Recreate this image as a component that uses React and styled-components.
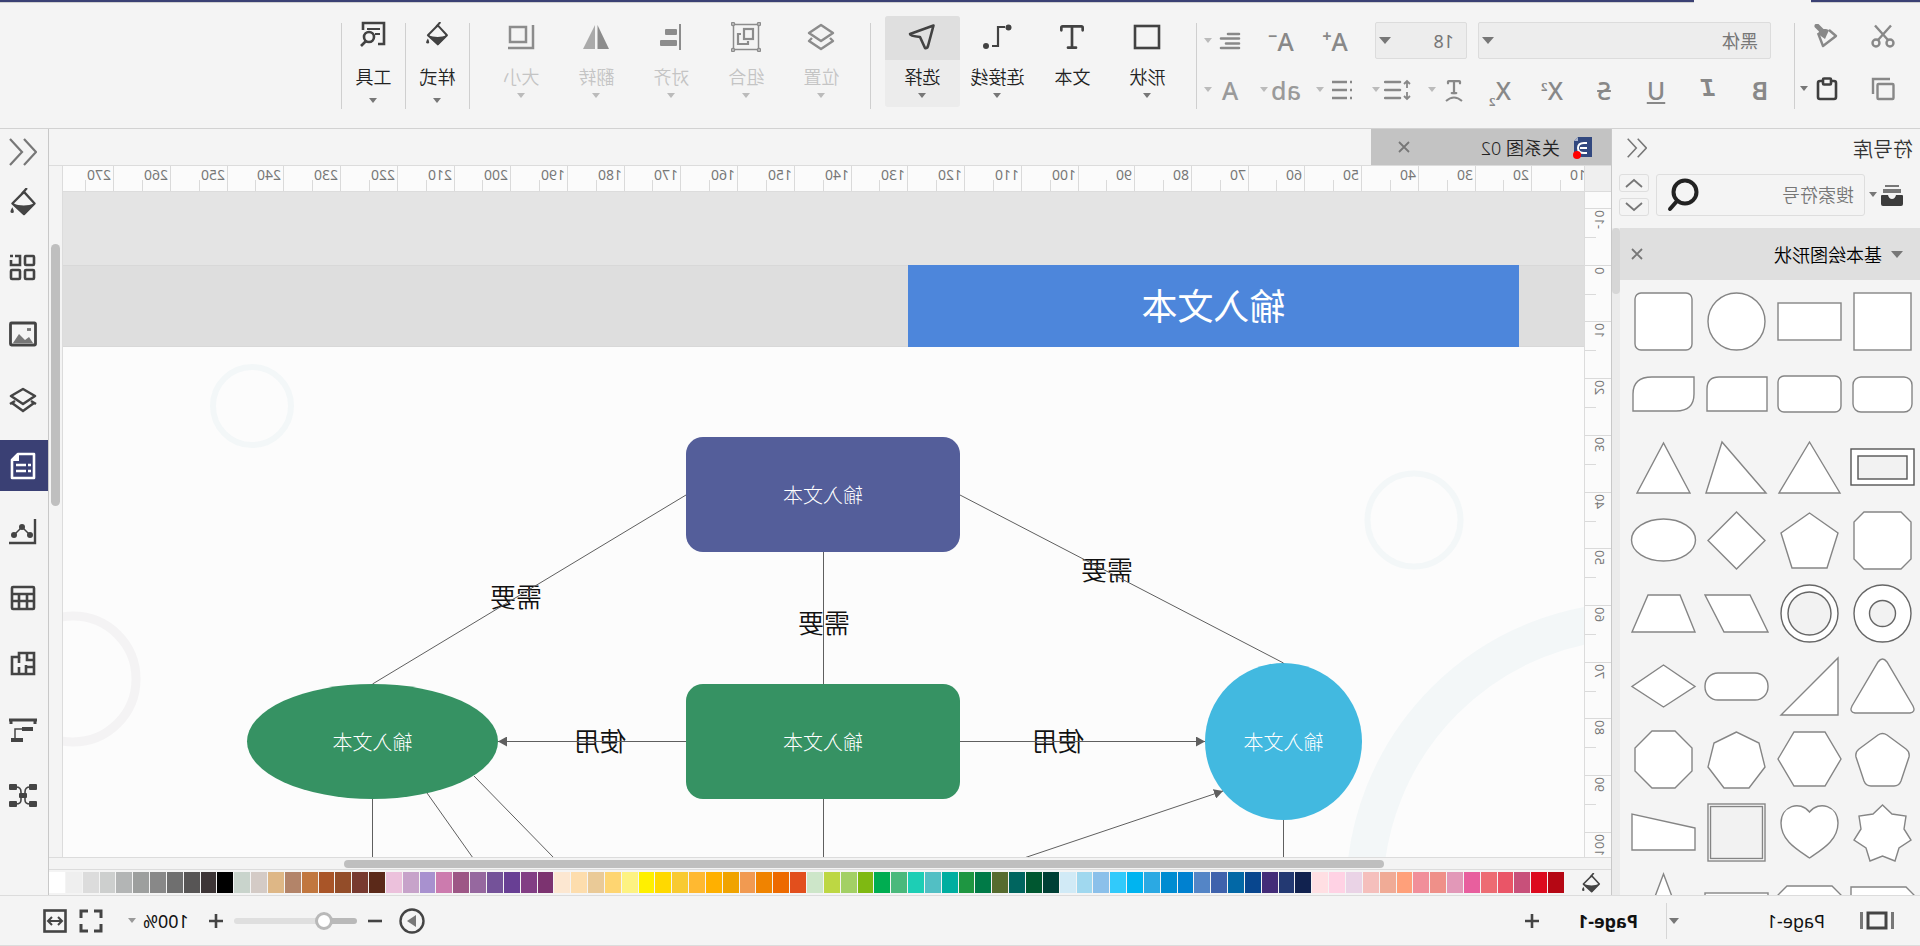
import React from 'react';
import styled, { createGlobalStyle, css } from 'styled-components';
import { Type } from 'lucide-react';

const GlobalStyle = createGlobalStyle`
  * {
    box-sizing: border-box;
  }
  body {
    margin: 0;
    overflow: hidden;
    background: #f4f4f4;
    font-family: 'Noto Sans', 'Noto Sans CJK SC', sans-serif;
    font-size: 18px;
    color: #222;
  }
  button, input, select {
    font: inherit;
    color: inherit;
  }
  button {
    padding: 0;
    border: 0;
    background: none;
  }
  svg {
    flex: none;
  }
`;

// the whole editor is shown flipped from left to right
const Window = styled.div`
  display: flex;
  flex-direction: column;
  height: 100vh;
  transform: scaleX(-1);
  background: #f4f4f4;
`;

const MenuStrip = styled.div`
  display: flex;
  flex: none;
  height: 3px;
`;

const StripPart = styled.div`
  flex: ${(props) => (props.$grow ? '1' : 'none')};
  width: ${(props) => props.$width}px;
  background: ${(props) => (props.$open ? '#f4f4f4' : '#3b4174')};
  border-bottom: 1px solid ${(props) => (props.$open ? '#f4f4f4' : '#d0d0d0')};
`;

/* ---------- ribbon ---------- */

const Ribbon = styled.header`
  display: flex;
  flex: none;
  align-items: flex-start;
  height: 126px;
  border-bottom: 1px solid #d2d2d2;
`;

const Divider = styled.div`
  width: 1px;
  height: 86px;
  margin-top: 20px;
  background: #cfcfcf;
`;

const Caret = styled.span`
  display: inline-block;
  flex: none;
  border: ${(props) => props.$size || 4}px solid transparent;
  border-bottom-width: 0;
  border-top: ${(props) => (props.$size || 4) + 1}px solid ${(props) => props.$color || '#777'};
`;

const ClipboardGroup = styled.div`
  display: grid;
  grid-template-columns: 54px 60px;
  grid-template-rows: 53px 53px;
  align-items: center;
  width: 125px;
  padding: 6px 0 0 10px;
`;

const ClipButton = styled.button`
  display: flex;
  align-items: center;
  justify-content: ${(props) => (props.$center ? 'center' : 'flex-start')};
  gap: 8px;
  padding-left: ${(props) => (props.$center ? 0 : 18)}px;
  color: ${(props) => (props.$dark ? '#3f3f3f' : '#888')};
`;

const FontGroup = styled.div`
  display: flex;
  flex-direction: column;
  padding: 19px 7px 0 8px;
`;

const FontRow = styled.div`
  display: flex;
  align-items: center;
  height: 37px;
  margin-bottom: 12px;
  padding-left: ${(props) => props.$indent || 0}px;
`;

const SelectBox = styled.label`
  position: relative;
  width: ${(props) => props.$width}px;
  height: 37px;
  margin-right: ${(props) => props.$gap}px;

  ${Caret} {
    position: absolute;
    top: 15px;
    right: 4px;
  }
`;

const Select = styled.select`
  width: 100%;
  height: 100%;
  padding: 0 12px;
  border: 1px solid #dcdcdc;
  border-radius: 2px;
  background: #ededed;
  color: #777;
  appearance: none;
`;

const GlyphButton = styled.button`
  width: 52px;
  height: 36px;
  margin-right: ${(props) => props.$gap || 0}px;
  color: #888;
  font-size: 25px;
  line-height: 36px;
  font-weight: ${(props) => props.$weight || 500};
  ${(props) => props.$slab && css`
    font-family: 'Liberation Mono', monospace;
    font-style: italic;
  `}

  sup, sub {
    font-family: ${(props) => (props.$sign ? 'inherit' : "'Liberation Serif', serif")};
    font-size: ${(props) => (props.$sign ? 16 : 13)}px;
    line-height: 0;
    font-weight: 700;
  }
`;

const SplitList = styled.div`
  display: flex;
  gap: 16px;
  margin-left: ${(props) => (props.$end ? 'auto' : '6px')};
`;

const Split = styled.button`
  display: flex;
  align-items: center;
  gap: 4px;
  height: 36px;
`;

const SplitIcon = styled.span`
  display: flex;
  flex-direction: column;
  align-items: center;
  width: 28px;
  color: ${(props) => (props.$pale ? '#9a9a9a' : '#888')};
  font-size: 25px;
  font-weight: 500;
  line-height: 36px;
`;

const ToolGroup = styled.div`
  display: flex;
  padding: ${(props) => (props.$narrow ? '13px 0 0' : '13px 14px 0 11px')};
`;

const ToolButton = styled.button`
  display: flex;
  flex-direction: column;
  align-items: center;
  width: ${(props) => (props.$narrow ? 63 : 75)}px;
  height: 91px;
  border-radius: 3px;
  overflow: hidden;
  background: ${(props) => (props.$active ? '#ececec' : 'none')};
  color: ${(props) => (props.$disabled ? '#c4c4c4' : '#222')};
`;

const ToolIcon = styled.span`
  display: flex;
  align-items: center;
  justify-content: center;
  width: 100%;
  height: 44px;
  padding-bottom: ${(props) => (props.$narrow ? 8 : 2)}px;
  background: ${(props) => (props.$active ? '#dfdfdf' : 'none')};
  color: ${(props) => (props.$disabled ? '#8c8c8c' : '#424242')};
`;

const ToolLabel = styled.span`
  height: ${(props) => (props.$narrow ? 38 : 33)}px;
  line-height: 34px;
  font-weight: 350;
  white-space: nowrap;
`;

/* ---------- body ---------- */

const Body = styled.main`
  display: flex;
  flex: 1;
  min-height: 0;
`;

const Library = styled.aside`
  display: flex;
  flex-direction: column;
  flex: none;
  width: 309px;
  border-right: 1px solid #c8c8c8;
`;

const LibraryHead = styled.div`
  display: flex;
  align-items: center;
  justify-content: space-between;
  height: 38px;
  padding: 0 15px 0 7px;
  font-size: 20px;
  font-weight: 350;
  color: #333;
`;

const IconButton = styled.button`
  display: flex;
  align-items: center;
  justify-content: center;
  color: ${(props) => props.$color || '#444'};
`;

const SearchRow = styled.div`
  display: flex;
  align-items: center;
  height: 55px;
  padding: 0 7px 0 17px;
  margin-bottom: 6px;
`;

const LibraryMenu = styled.button`
  display: flex;
  align-items: center;
  gap: 4px;
  width: 38px;
`;

const SearchBox = styled.label`
  display: flex;
  align-items: center;
  flex: 1;
  min-width: 0;
  height: 42px;
  margin-right: 7px;
  padding: 0 10px;
  border: 1px solid #dedede;
  border-radius: 3px;
`;

const SearchInput = styled.input`
  flex: 1;
  min-width: 0;
  padding: 0;
  border: 0;
  outline: 0;
  background: none;
  font-weight: 350;

  &::placeholder {
    color: #777;
    opacity: 1;
  }
`;

const Stepper = styled.div`
  display: flex;
  flex-direction: column;
  gap: 6px;

  button {
    display: flex;
    align-items: center;
    justify-content: center;
    width: 30px;
    height: 18px;
    border: 1px solid #dedede;
    border-radius: 3px;
  }
`;

const LibraryBody = styled.div`
  display: flex;
  flex: 1;
  min-height: 0;
`;

const LibraryContent = styled.div`
  flex: 1;
  overflow: hidden;
`;

const CategoryBar = styled.div`
  display: flex;
  align-items: center;
  gap: 9px;
  height: 52px;
  padding: 0 11px 0 17px;
  background: #dfdfdf;
  color: #000;
  font-weight: 350;

  button {
    margin-left: auto;
  }
`;

const LibraryScroll = styled.div`
  width: 8px;
  background: #ebebeb;
`;

const LibraryThumb = styled.div`
  height: 66px;
  border-radius: 4px;
  background: #d6d6d6;
`;

const ShapeGrid = styled.div`
  display: grid;
  grid-template-columns: repeat(4, 73px);
  grid-auto-rows: 73px;
  padding: 5px 0 0 1px;
`;

const ShapeCell = styled.svg`
  display: block;
  width: 73px;
  height: 73px;
  fill: #fff;
  stroke: #858585;
  stroke-width: 1.4;
`;

const Workspace = styled.section`
  display: flex;
  flex-direction: column;
  flex: 1;
  min-width: 0;
`;

const TabBar = styled.div`
  display: flex;
  height: 37px;
  border-bottom: 1px solid #dcdcdc;
`;

const Tab = styled.div`
  display: flex;
  align-items: center;
  width: 240px;
  padding: 0 27px 0 18px;
  background: #c3c3c3;

  button {
    margin-left: auto;
  }
`;

const TabName = styled.span`
  margin-left: 13px;
  font-weight: 350;
`;

const EditorGrid = styled.div`
  display: grid;
  flex: 1;
  min-height: 0;
  grid-template-columns: 27px minmax(0, 1fr) 14px;
  grid-template-rows: 26px minmax(0, 1fr);
`;

const Corner = styled.div`
  background: #efefef;
  border-right: 1px solid #dcdcdc;
  border-bottom: 1px solid #dcdcdc;
`;

const RulerTop = styled.div`
  display: flex;
  overflow: hidden;
  background: #fbfbfb;
  border-bottom: 1px solid #dcdcdc;
`;

const RulerTopInner = styled.div`
  display: flex;
  margin-left: -5px;
`;

const RulerSide = styled.div`
  display: flex;
  flex-direction: column;
  overflow: hidden;
  background: #fbfbfb;
  border-right: 1px solid #dcdcdc;
  padding-top: 16px;
`;

const TickTop = styled.div`
  flex: none;
  display: flex;
  padding-left: 2px;
  border-left: 1px solid #dadada;
  font-size: 14px;
  line-height: 18px;
  color: #777;
  background: linear-gradient(#dadada, #dadada) 27px 100% / 1px 11px no-repeat;
`;

const TickSide = styled.div`
  flex: none;
  display: flex;
  padding: 1px 0 0 2px;
  border-top: 1px solid #dadada;
  font-size: 13px;
  line-height: 18px;
  color: #777;
  background: linear-gradient(#dadada, #dadada) 100% 28px / 11px 1px no-repeat;

  span {
    writing-mode: vertical-rl;
    transform: rotate(180deg);
    align-self: flex-start;
  }
`;

const ScrollSide = styled.div`
  grid-column: 3;
  grid-row: 1 / 3;
  display: grid;
  grid-template-rows: 78fr 262fr 351fr;
  padding: 0 2px;
  border-left: 1px solid #dcdcdc;
`;

const ScrollBottom = styled.div`
  display: grid;
  flex: none;
  grid-template-columns: 227fr 1041fr 295fr;
  height: 13px;
  padding: 2px 0 1px;
  border-top: 1px solid #dcdcdc;
  border-bottom: 1px solid #dcdcdc;
`;

const Thumb = styled.div`
  grid-column: ${(props) => (props.$side ? 1 : 2)};
  grid-row: ${(props) => (props.$side ? 2 : 1)};
  border-radius: 5px;
  background: #bfbfbf;
`;

const Canvas = styled.div`
  position: relative;
  overflow: hidden;
  background: #e4e4e4;
`;

const PageTop = styled.div`
  position: absolute;
  top: 73px;
  left: 0;
  right: 0;
  height: 82px;
  background: #dedede;
  border-top: 1px solid #d8d8d8;
  border-bottom: 1px solid #d8d8d8;
`;

const Page = styled.div`
  position: absolute;
  top: 155px;
  left: 0;
  right: 0;
  bottom: 0;
  background: #fcfcfc;
`;

const Drawing = styled.svg`
  position: absolute;
  top: 0;
  left: 0;
  width: 100%;
  height: 100%;
`;

const Node = styled.div`
  position: absolute;
  left: ${(props) => props.$x}px;
  top: ${(props) => props.$y}px;
  display: flex;
  align-items: center;
  justify-content: center;
  width: ${(props) => props.$w}px;
  height: ${(props) => props.$h}px;
  padding-bottom: ${(props) => (props.$title ? 5 : 1)}px;
  border-radius: ${(props) => props.$radius};
  background: ${(props) => props.$fill};
  color: #fff;
  font-family: 'Noto Sans CJK SC', sans-serif;
  font-size: ${(props) => (props.$title ? 36 : 20)}px;
  font-weight: ${(props) => (props.$title ? 400 : 300)};
`;

const LinkLabel = styled.span`
  position: absolute;
  left: ${(props) => props.$x - 26}px;
  top: ${(props) => props.$y - 19}px;
  font-family: 'Noto Sans CJK SC', sans-serif;
  font-size: 26px;
  font-weight: 350;
  line-height: 36px;
  color: #111;
`;

const ColorBar = styled.div`
  display: flex;
  flex: none;
  height: 25px;
  padding: 2px 0 2px 10px;
`;

const ColorIcon = styled.span`
  display: flex;
  align-items: center;
  width: 37px;
  color: #444;
`;

const Swatches = styled.div`
  display: flex;
  flex: 1;
  gap: 1px;
`;

const Swatch = styled.button`
  flex: 1;
  height: 21px;
  background: ${(props) => props.$color};
`;

const SideBar = styled.nav`
  display: flex;
  flex-direction: column;
  flex: none;
  gap: 15px;
  width: 49px;
  border-left: 1px solid #c8c8c8;
`;

const SideToggle = styled(IconButton)`
  height: 46px;
  margin-bottom: -14px;
  padding-left: 2px;
`;

const SideButton = styled(IconButton)`
  height: 51px;
  padding-left: 2px;
  background: ${(props) => (props.$active ? '#3a4074' : 'none')};
  color: ${(props) => (props.$active ? '#fff' : '#444')};
`;

/* ---------- status bar ---------- */

const StatusBar = styled.footer`
  display: flex;
  align-items: center;
  flex: none;
  height: 51px;
  padding: 0 43px 0 26px;
  border-top: 1px solid #dcdcdc;
  border-bottom: 1px solid #dcdcdc;
  color: #111;
`;

const PagePicker = styled.button`
  display: flex;
  align-items: center;
  justify-content: space-between;
  width: 156px;
  margin-left: 35px;
`;

const PageTab = styled.button`
  height: 36px;
  padding: 0 38px 0 28px;
  margin-left: 2px;
  border-left: 1px solid #d6d6d6;
  font-weight: 700;
`;

const ZoomTools = styled.div`
  display: flex;
  align-items: center;
  margin-left: auto;
`;

const Range = styled.input`
  width: 123px;
  height: 18px;
  margin: 0 10px;
  background: none;
  appearance: none;

  &::-webkit-slider-runnable-track {
    height: 6px;
    border-radius: 3px;
    background: linear-gradient(to right, #b9b9b9 27%, #dfdfdf 27%);
  }

  &::-webkit-slider-thumb {
    width: 18px;
    height: 18px;
    margin-top: -6px;
    border: 3px solid #b9b9b9;
    border-radius: 50%;
    background: #fff;
    appearance: none;
  }
`;

const ZoomOut = styled(IconButton)`
  margin-left: 16px;
`;

const ZoomValue = styled.button`
  display: flex;
  align-items: center;
  gap: 7px;
  margin: 0 25px 0 19px;
`;

const FitButton = styled(IconButton)`
  margin-left: 12px;
`;

/* ---------- icons ---------- */

const Icon = ({ w = 24, h = w, sw = 2, children }) => (
  <svg width={w} height={h} viewBox={`0 0 ${w} ${h}`} fill="none" stroke="currentColor" strokeWidth={sw} aria-hidden="true">
    {children}
  </svg>
);

const CutIcon = () => (
  <Icon sw={2.4}>
    <path d="M4 1.500L17 16M20 1.500L7 16" />
    <circle cx="5" cy="19" r="3.500" />
    <circle cx="19" cy="19" r="3.500" />
  </Icon>
);

const PainterIcon = () => (
  <Icon sw={2.4}>
    <path d="M9 6L2 12L15 22L20 9" strokeLinejoin="round" />
    <path d="M9 6L13 15L20 10L18 5L12 5Z" fill="currentColor" stroke="none" />
    <path d="M21 2L15 8" strokeWidth="5" strokeLinecap="round" />
  </Icon>
);

const CopyIcon = () => (
  <Icon sw={2.4}>
    <rect x="1.500" y="7" width="16" height="15" rx="1" />
    <path d="M5 2H22V17" />
  </Icon>
);

const PasteIcon = () => (
  <Icon w={22} h={24} sw={2.6}>
    <rect x="2" y="4" width="18" height="18" rx="2" />
    <rect x="7" y="1.500" width="8" height="6" rx="1" fill="#f4f4f4" />
  </Icon>
);

const AlignTextIcon = () => (
  <Icon w={22} h={18} sw={2.6}>
    <path d="M2 2H13M2 6.500H20M2 11.500H15M2 16H20" strokeLinecap="round" />
  </Icon>
);

const ArcIcon = () => (
  <Icon w={20} h={6}>
    <path d="M2 5Q10 -2 18 5" />
  </Icon>
);

const LineSpacingIcon = () => (
  <Icon w={28} h={22}>
    <path d="M12 3H27M12 11H27M12 19H27" strokeWidth="2.500" strokeLinecap="round" />
    <path d="M5 2V9M5 13V20M2 5L5 2L8 5M2 17L5 20L8 17" strokeWidth="1.800" />
  </Icon>
);

const ListIcon = () => (
  <Icon w={22} h={20} sw={2.6}>
    <path d="M6 2H21M6 10H21M6 18H21M1 2H3M1 10H3M1 18H3" />
  </Icon>
);

const RectIcon = () => (
  <Icon w={28} h={26} sw={2.6}>
    <rect x="2" y="2" width="24" height="22" />
  </Icon>
);

const ConnectorIcon = () => (
  <Icon w={30} h={26}>
    <path d="M7 3H14V22H20" strokeWidth="2.200" />
    <circle cx="3.500" cy="3.500" r="3" fill="currentColor" stroke="none" />
    <circle cx="26" cy="22" r="3" fill="currentColor" stroke="none" />
  </Icon>
);

const ArrowIcon = () => (
  <Icon w={28} h={28} sw={2.6}>
    <path d="M2.500 2.500L26 11Q26 13 16 14L11 25Q9 26 8 23Z" strokeLinejoin="round" />
  </Icon>
);

const PositionIcon = () => (
  <Icon w={28} h={28} sw={2.4}>
    <path d="M14 2L26 10L14 18L2 10Z" strokeLinejoin="round" />
    <path d="M5 15L2 18L14 26L26 18L23 15" strokeLinejoin="round" />
  </Icon>
);

const GroupIcon = () => (
  <Icon w={30} h={30} sw={1.5}>
    <rect x="2.500" y="2.500" width="25" height="25" />
    {[[2, 2], [28, 2], [2, 28], [28, 28]].map(([x, y]) => <circle key={`${x}-${y}`} cx={x} cy={y} r="1.500" fill="#f4f4f4" />)}
    <rect x="8" y="7" width="9" height="10" strokeWidth="2.200" />
    <path d="M20 12H23V22H13V19" strokeWidth="2.200" />
  </Icon>
);

const AlignIcon = () => (
  <Icon w={22} h={28} sw={2}>
    <path d="M2 1V27" />
    <rect x="5" y="6" width="12" height="6" rx="1" fill="currentColor" stroke="none" />
    <rect x="5" y="17" width="17" height="6" rx="1" fill="currentColor" stroke="none" />
  </Icon>
);

const FlipIcon = () => (
  <Icon w={28} h={26}>
    <path d="M1 25H12.500V1Z" fill="currentColor" stroke="none" />
    <path d="M27 25H15V1Z" fill="#aaa" stroke="none" />
  </Icon>
);

const SizeIcon = () => (
  <Icon w={28} h={26} sw={2.5}>
    <rect x="9" y="3" width="16" height="15" />
    <path d="M2 1V24H27" />
  </Icon>
);

const BucketIcon = ({ size = 28 }) => (
  <svg width={size} height={size} viewBox="0 0 28 29" fill="none" stroke="currentColor" strokeWidth="2.4" aria-hidden="true">
    <path d="M13 4L25 16L13 27L2 16Z" strokeLinejoin="round" />
    <path d="M2 16Q13 20 25 16L13 28Z" fill="currentColor" stroke="none" />
    <path d="M15 6L10 0" />
    <path d="M25 20Q29 26 25 26Q22 26 25 20Z" fill="currentColor" stroke="none" />
  </svg>
);

const InspectIcon = () => (
  <Icon w={28} h={26} sw={2.6}>
    <path d="M9 23H3V2H24V9" />
    <path d="M7 8H20M7 13H12" strokeWidth="2" />
    <circle cx="18" cy="16" r="5" />
    <path d="M21 20L26 25" />
  </Icon>
);

const DoubleChevron = ({ size = 20 }) => (
  <svg width={size} height={size} viewBox="0 0 28 28" fill="none" stroke="#777" strokeWidth="2.2" aria-hidden="true">
    <path d="M13 1L1 14L13 27M27 1L15 14L27 27" />
  </svg>
);

const TrayIcon = () => (
  <Icon w={22} h={22}>
    <path d="M4 2H18" stroke="#777" strokeWidth="2" />
    <path d="M2 7H20" stroke="#777" strokeWidth="4" />
    <path d="M1 11H7Q8 15 11 15Q14 15 15 11H21Q22 11 22 12V20Q22 22 20 22H2Q0 22 0 20V12Q0 11 1 11Z" fill="#3c3c3c" stroke="none" />
  </Icon>
);

const MagnifierIcon = () => (
  <Icon w={32} h={34} sw={4}>
    <circle cx="14" cy="14" r="11.500" />
    <path d="M22 23L29 31" strokeLinecap="round" />
  </Icon>
);

const ChevronIcon = ({ down }) => (
  <Icon w={18} h={10} sw={1.8}>
    <path d={down ? 'M1 1L9 8L17 1' : 'M1 9L9 2L17 9'} stroke="#777" />
  </Icon>
);

const CloseIcon = () => (
  <Icon w={12} sw={1.8}>
    <path d="M1 1L11 11M11 1L1 11" />
  </Icon>
);

const FileIcon = () => (
  <Icon w={20} h={23}>
    <path d="M1 1H15L19 5V21H1Z" fill="#32487f" stroke="none" />
    <path d="M15 1V5H19Z" fill="#a9b3cc" stroke="none" />
    <path d="M6 7H9Q15 7 15 12Q15 17 9 17H6M6 12H13" stroke="#fff" />
    <circle cx="16" cy="19" r="4" fill="#f00" stroke="none" />
  </Icon>
);

const SymbolsIcon = () => (
  <Icon w={27} sw={2.6}>
    <rect x="2" y="2" width="9" height="9" rx="1" />
    <rect x="2" y="16" width="9" height="9" rx="1" />
    <rect x="16" y="16" width="9" height="9" rx="1" />
    <path d="M21 2H16V11H25V6M23 2H26" />
  </Icon>
);

const ImageIcon = () => (
  <Icon w={28} h={26} sw={2.8}>
    <rect x="1.500" y="2" width="25" height="22" rx="1" />
    <path d="M4 22L8 16L12 19L18 13L24 22Z" fill="#777" stroke="none" />
    <path d="M6 8.500H10" stroke="#777" />
  </Icon>
);

const LayersIcon = () => (
  <Icon w={28} h={26} sw={2.6}>
    <path d="M14 2L26 9L14 17L2 9Z" strokeLinejoin="round" />
    <path d="M3 16L14 24L25 16" />
    <path d="M1 17L6 14M27 17L22 14" />
  </Icon>
);

const PageIcon = () => (
  <Icon w={26} h={28} sw={2.6}>
    <path d="M2 2H18L24 8V26H2Z" strokeLinejoin="round" />
    <path d="M17 2L24 9H17Z" fill="currentColor" stroke="none" />
    <path d="M5 13H8M10 13H20M5 19H8M10 19H20" />
  </Icon>
);

const ChartIcon = () => (
  <Icon w={28} h={26} sw={2.4}>
    <path d="M2 0V24H28" />
    <path d="M7 16L15 8L23 16" strokeWidth="1.500" />
    <circle cx="7" cy="16" r="3" fill="currentColor" stroke="none" />
    <circle cx="15" cy="8" r="3" fill="currentColor" stroke="none" />
    <circle cx="23" cy="16" r="3" fill="currentColor" stroke="none" />
  </Icon>
);

const TableIcon = () => (
  <Icon w={26} sw={2.6}>
    <rect x="2" y="2" width="22" height="22" rx="1" />
    <path d="M2 9H24M2 16H24M9 9V24M17 9V24" />
  </Icon>
);

const FloorIcon = () => (
  <Icon w={26} h={25} sw={2.6}>
    <path d="M2 2H17V6H24V23H2Z" />
    <path d="M9 2V9H2M2 16H10V23M10 16V14M17 6V12M17 16V23" />
  </Icon>
);

const OrgIcon = () => (
  <Icon w={28} h={26} sw={4}>
    <path d="M0 3H28M2 2V7M26 2V7" strokeWidth="3" />
    <path d="M4 12H15M14 23H26" />
    <path d="M15 12H22V22" strokeWidth="1.500" />
  </Icon>
);

const MindIcon = () => (
  <Icon w={28} h={26} sw={1.6}>
    <path d="M7 4Q12 4 12 9V17Q12 21 7 21M21 4Q16 4 16 9V17Q16 21 21 21" />
    <g fill="currentColor" stroke="none">
      <rect x="0" y="1" width="8" height="6" rx="1" />
      <rect x="20" y="1" width="8" height="6" rx="1" />
      <rect x="10" y="10" width="8" height="5" rx="1" />
      <rect x="0" y="18" width="8" height="6" rx="1" />
      <rect x="20" y="18" width="8" height="6" rx="1" />
    </g>
  </Icon>
);

const SlidesIcon = () => (
  <Icon w={34} h={20} sw={3}>
    <rect x="8" y="2" width="18" height="15" />
    <path d="M1.500 1V18M32.500 1V18" stroke="#777" />
  </Icon>
);

const PlusIcon = () => (
  <Icon w={16} sw={2.6}>
    <path d="M1 8H15M8 1V15" />
  </Icon>
);

const MinusIcon = () => (
  <Icon w={16} sw={2.6}>
    <path d="M1 8H15" />
  </Icon>
);

const PlayIcon = () => (
  <Icon w={26} sw={2.4}>
    <circle cx="13" cy="13" r="11.500" />
    <path d="M9 7V19L18 13Z" fill="#777" stroke="none" />
  </Icon>
);

const FullIcon = () => (
  <Icon w={24} sw={3}>
    <path d="M2 9V2H9M15 2H22V9M22 15V22H15M9 22H2V15" />
  </Icon>
);

const FitIcon = () => (
  <Icon w={24} sw={2.6}>
    <rect x="1.500" y="1.500" width="21" height="21" />
    <path d="M6 12H18M9 8L5 12L9 16M15 8L19 12L15 16" strokeWidth="2" />
  </Icon>
);

/* ---------- data ---------- */

const shapes = [
  <rect x="8" y="8" width="57" height="57" />,
  <rect x="5" y="18" width="63" height="37" />,
  <circle cx="36.500" cy="36.500" r="28.500" />,
  <rect x="8" y="8" width="57" height="57" rx="6" />,

  <rect x="7" y="19" width="59" height="35" rx="8" />,
  <rect x="5" y="18" width="63" height="36" rx="6" />,
  <path d="M6 19H54Q66 19 66 31V53H6Z" />,
  <path d="M6 19H48Q67 19 67 36V53H24Q6 53 6 36Z" />,

  <g stroke="#555"><rect x="5" y="18" width="63" height="36" /><rect x="12" y="25" width="49" height="23" fill="#f2f2f2" /></g>,
  <path d="M6 62L36.500 11L67 62Z" />,
  <path d="M7 62L51 11L67 62Z" />,
  <path d="M10 62L36.500 12L63 62Z" />,

  <path d="M18 8H55L65 18V55L55 65H18L8 55V18Z" />,
  <path d="M36.500 9L65 29L54 64H19L8 29Z" />,
  <path d="M36.500 8L65 36.500L36.500 65L8 36.500Z" />,
  <ellipse cx="36.500" cy="36" rx="32" ry="21" />,

  <g stroke="#666"><circle cx="36.500" cy="36.500" r="28.500" /><circle cx="36.500" cy="36.500" r="13" fill="#f2f2f2" /></g>,
  <g stroke="#666"><circle cx="36.500" cy="36.500" r="28.500" /><circle cx="36.500" cy="36.500" r="21.500" fill="#f2f2f2" /></g>,
  <path d="M23 18H68L49 55H5Z" />,
  <path d="M20 18H52L68 55H5Z" />,

  <path d="M32 12Q36.500 6 41 12L67 56Q70 62 64 63H9Q3 62 6 56Z" />,
  <path d="M8 8V65H65Z" />,
  <rect x="5" y="23" width="63" height="27" rx="13" />,
  <path d="M36.500 15L68 36.500L36.500 57L5 36.500Z" />,

  <path d="M32 12Q36.500 9 41 12L60 26Q64 29 63 34L55 58Q53 63 48 63H25Q20 63 18 58L10 34Q9 29 13 26Z" />,
  <path d="M21 9H52L68 36L52 63H21L5 36Z" />,
  <path d="M36.500 9L59 20L65 44L49 65H24L8 44L14 20Z" />,
  <path d="M25 8H48L65 25V48L48 65H25L8 48V25Z" />,

  <path d="M36.500 9L46 18L60 20L58 33L65 44L53 52L49 65L36.500 60L24 65L20 52L8 44L15 33L13 20L27 18Z" />,
  <path d="M36.500 16C46 4 65 10 65 27C65 45 48 54 36.500 62C25 54 8 45 8 27C8 10 27 4 36.500 16Z" />,
  <g><rect x="8" y="8" width="57" height="57" /><rect x="10.500" y="10.500" width="52" height="52" fill="#f2f2f2" /></g>,
  <path d="M5 32L68 18V54H5Z" />,

  <path d="M13 18H68V55H5V26Z" />,
  <path d="M14 17H59L68 26V55H5V26Z" />,
  <rect x="5" y="24" width="63" height="26" />,
  <path d="M36.500 5L58 62H15Z" />,
];

const colors = `#b50714 #dc0a1e #c8507a #ea5567 #ed6c73 #e85f9e #e298b8 #ef9089 #f18f9a #ffa07a #f0ab96 #f5bfbc
#ead3e6 #ffd2e4 #ffdfe3 #11224f #233972 #432c78 #08468e #0268a6 #3f62ac #5485c6 #0081d0 #008cd1 #2ba9e3 #00b4f0
#31cafb #8bc0ea #a0d8ef #d1eaf6 #004035 #005730 #00655f #566b2f #007a47 #1e9641 #00aea0 #52bfc4 #1dceb5 #4ab97c
#00ad51 #7fb912 #a3d065 #bdd743 #cde6c9 #e24f1d #ed6a00 #f08300 #f19a51 #f0a300 #ffb000 #ffb931 #f8ca31 #ffd900
#fff000 #fdf282 #fed571 #eaca97 #fdddad #fce7d1 #7c3370 #823e84 #683f94 #745299 #96689f #9d5786 #cc7bae #a891cf
#c7a3ca #ecc1dc #5b2919 #783a30 #934d29 #a95528 #c1773f #b38469 #deb786 #d4cbc6 #c9d4cc #000000 #3d3536 #575555
#6f6f6f #888888 #9d9f9e #b3b5b5 #cdcfce #dcdcdc #efefef #ffffff`.split(/\s+/);

// ten units of the ruler at the current zoom
const UNIT = 56.72;
const tickSize = (i) => Math.round((i + 1) * UNIT) - Math.round(i * UNIT);
const topTicks = Array.from({ length: 27 }, (_, i) => (i + 1) * 10);
const sideTicks = Array.from({ length: 12 }, (_, i) => (i - 1) * 10);

const drawTools = [
  { label: '形状', icon: <RectIcon />, caret: true },
  { label: '文本', icon: <Type size={32} strokeWidth={2} /> },
  { label: '连接线', icon: <ConnectorIcon />, caret: true },
  { label: '选择', icon: <ArrowIcon />, caret: true, active: true },
];

const arrangeTools = [
  { label: '位置', icon: <PositionIcon /> },
  { label: '组合', icon: <GroupIcon /> },
  { label: '对齐', icon: <AlignIcon /> },
  { label: '翻转', icon: <FlipIcon /> },
  { label: '大小', icon: <SizeIcon /> },
].map((tool) => ({ ...tool, caret: true, disabled: true }));

const sideTools = [
  { name: '填充', icon: <BucketIcon /> },
  { name: '符号', icon: <SymbolsIcon /> },
  { name: '图片', icon: <ImageIcon /> },
  { name: '图层', icon: <LayersIcon /> },
  { name: '页面', icon: <PageIcon />, active: true },
  { name: '图表', icon: <ChartIcon /> },
  { name: '表格', icon: <TableIcon /> },
  { name: '平面图', icon: <FloorIcon /> },
  { name: '组织结构', icon: <OrgIcon /> },
  { name: '思维导图', icon: <MindIcon /> },
];

const nodes = [
  { x: 65, y: 73, w: 611, h: 82, fill: '#4d86db', radius: '0', title: true },
  { x: 624, y: 245, w: 274, h: 115, fill: '#545e9a', radius: '17px' },
  { x: 624, y: 492, w: 274, h: 115, fill: '#369263', radius: '17px' },
  { x: 1086, y: 492, w: 251, h: 115, fill: '#369263', radius: '50%' },
  { x: 222, y: 471, w: 157, h: 157, fill: '#42b9e0', radius: '50%' },
];

const linkLabels = [
  { text: '需要', x: 477, y: 378 },
  { text: '需要', x: 760, y: 431 },
  { text: '需要', x: 1068, y: 405 },
  { text: '使用', x: 526, y: 549 },
  { text: '使用', x: 984, y: 549 },
];

/* ---------- parts ---------- */

const Tool = ({ label, icon, caret, active, disabled, narrow }) => (
  <ToolButton $active={active} $disabled={disabled} $narrow={narrow}>
    <ToolIcon $active={active} $disabled={disabled} $narrow={narrow}>{icon}</ToolIcon>
    <ToolLabel $narrow={narrow}>{label}</ToolLabel>
    {caret && <Caret $color={disabled ? '#bbb' : '#777'} />}
  </ToolButton>
);

const SplitTool = ({ name, pale, children }) => (
  <Split aria-label={name}>
    <SplitIcon $pale={pale}>{children}</SplitIcon>
    <Caret $color="#bbb" />
  </Split>
);

const TopRibbon = () => (
  <Ribbon>
    <ClipboardGroup>
      <ClipButton $center aria-label="剪切"><CutIcon /></ClipButton>
      <ClipButton aria-label="格式刷"><PainterIcon /></ClipButton>
      <ClipButton $center aria-label="复制"><CopyIcon /></ClipButton>
      <ClipButton $dark aria-label="粘贴"><PasteIcon /><Caret /></ClipButton>
    </ClipboardGroup>
    <Divider />
    <FontGroup>
      <FontRow $indent={15}>
        <SelectBox $width={293} $gap={11}>
          <Select aria-label="字体" defaultValue="黑体"><option>黑体</option></Select>
          <Caret $size={6} />
        </SelectBox>
        <SelectBox $width={92} $gap={14}>
          <Select aria-label="字号" defaultValue="18"><option>18</option></Select>
          <Caret $size={6} />
        </SelectBox>
        <GlyphButton $sign $gap={2}>A<sup>+</sup></GlyphButton>
        <GlyphButton $sign>A<sup>−</sup></GlyphButton>
        <SplitList $end>
          <SplitTool name="对齐方式"><AlignTextIcon /></SplitTool>
        </SplitList>
      </FontRow>
      <FontRow>
        <GlyphButton $weight={600}>B</GlyphButton>
        <GlyphButton $slab $weight={700}>I</GlyphButton>
        <GlyphButton><u>U</u></GlyphButton>
        <GlyphButton><s>S</s></GlyphButton>
        <GlyphButton>X<sup>2</sup></GlyphButton>
        <GlyphButton>X<sub>2</sub></GlyphButton>
        <SplitList>
          <SplitTool name="文字弧度"><Type size={18} strokeWidth={3} /><ArcIcon /></SplitTool>
          <SplitTool name="行距"><LineSpacingIcon /></SplitTool>
          <SplitTool name="列表"><ListIcon /></SplitTool>
          <SplitTool name="高亮" pale>ab</SplitTool>
          <SplitTool name="文字颜色" pale>A</SplitTool>
        </SplitList>
      </FontRow>
    </FontGroup>
    <Divider />
    <ToolGroup>{drawTools.map((tool) => <Tool key={tool.label} {...tool} />)}</ToolGroup>
    <Divider />
    <ToolGroup>{arrangeTools.map((tool) => <Tool key={tool.label} {...tool} />)}</ToolGroup>
    <Divider />
    <ToolGroup $narrow><Tool narrow caret label="样式" icon={<BucketIcon size={24} />} /></ToolGroup>
    <Divider />
    <ToolGroup $narrow><Tool narrow caret label="工具" icon={<InspectIcon />} /></ToolGroup>
    <Divider />
  </Ribbon>
);

const SymbolLibrary = () => (
  <Library>
    <LibraryHead>
      符号库
      <IconButton aria-label="收起"><DoubleChevron /></IconButton>
    </LibraryHead>
    <SearchRow>
      <LibraryMenu aria-label="符号库菜单"><TrayIcon /><Caret /></LibraryMenu>
      <SearchBox>
        <SearchInput type="text" placeholder="搜索符号" />
        <MagnifierIcon />
      </SearchBox>
      <Stepper>
        <button aria-label="上一个"><ChevronIcon /></button>
        <button aria-label="下一个"><ChevronIcon down /></button>
      </Stepper>
    </SearchRow>
    <LibraryBody>
      <LibraryContent>
        <CategoryBar>
          <Caret $size={6} />
          基本绘图形状
          <IconButton $color="#777" aria-label="关闭"><CloseIcon /></IconButton>
        </CategoryBar>
        <ShapeGrid>
          {shapes.map((shape, i) => <ShapeCell key={i} viewBox="0 0 73 73">{shape}</ShapeCell>)}
        </ShapeGrid>
      </LibraryContent>
      <LibraryScroll><LibraryThumb /></LibraryScroll>
    </LibraryBody>
  </Library>
);

const Diagram = () => (
  <Canvas>
    <PageTop />
    <Page />
    <Drawing fill="none">
      <circle cx="1332" cy="214" r="39" stroke="#f3f7f8" strokeWidth="6" />
      <circle cx="170" cy="328" r="46.500" stroke="#f3f7f8" strokeWidth="6" />
      <circle cx="1511" cy="487" r="63" stroke="#f4f3f4" strokeWidth="9" />
      <circle cx="-54" cy="702" r="273.500" stroke="#f3f7f8" strokeWidth="37" />
    </Drawing>
    {nodes.map((n) => (
      <Node key={`${n.x}-${n.y}`} $x={n.x} $y={n.y} $w={n.w} $h={n.h} $fill={n.fill} $radius={n.radius} $title={n.title}>
        输入文本
      </Node>
    ))}
    {linkLabels.map((l) => <LinkLabel key={l.x} $x={l.x} $y={l.y}>{l.text}</LinkLabel>)}
    <Drawing fill="none" stroke="#5f5f5f">
      <defs>
        <marker id="arrow" viewBox="0 0 9 10" refX="9" refY="5" markerWidth="9" markerHeight="10" orient="auto">
          <path d="M0 0L9 5L0 10Z" fill="#5f5f5f" stroke="none" />
        </marker>
      </defs>
      <path d="M624 303L300.500 471" />
      <path d="M898 303L1211.500 492" />
      <path d="M760.500 360V492M760.500 607V700" />
      <path d="M624 549.500H379" markerEnd="url(#arrow)" />
      <path d="M898 549.500H1086" markerEnd="url(#arrow)" />
      <path d="M560 666L361 599" markerEnd="url(#arrow)" />
      <path d="M300.500 628V700M1211.500 607V700" />
      <path d="M1110 584L1030 666M1157 601L1111 666" />
    </Drawing>
  </Canvas>
);

const Editor = () => (
  <Workspace>
    <TabBar>
      <Tab>
        <FileIcon />
        <TabName>关系图 02</TabName>
        <IconButton $color="#777" aria-label="关闭"><CloseIcon /></IconButton>
      </Tab>
    </TabBar>
    <EditorGrid>
      <Corner />
      <RulerTop>
        <RulerTopInner>
          {topTicks.map((t, i) => <TickTop key={t} style={{ width: tickSize(i) }}>{t}</TickTop>)}
        </RulerTopInner>
      </RulerTop>
      <RulerSide>
        {sideTicks.map((t, i) => <TickSide key={t} style={{ height: tickSize(i) }}><span>{t}</span></TickSide>)}
      </RulerSide>
      <Diagram />
      <ScrollSide><Thumb $side /></ScrollSide>
    </EditorGrid>
    <ScrollBottom><Thumb /></ScrollBottom>
    <ColorBar>
      <ColorIcon><BucketIcon size={20} /></ColorIcon>
      <Swatches>
        {colors.map((c) => <Swatch key={c} $color={c} aria-label={c} />)}
      </Swatches>
    </ColorBar>
  </Workspace>
);

const Status = () => (
  <StatusBar>
    <IconButton aria-label="页面视图"><SlidesIcon /></IconButton>
    <PagePicker>Page-1<Caret $size={5} /></PagePicker>
    <PageTab>Page-1</PageTab>
    <IconButton aria-label="新建页面"><PlusIcon /></IconButton>
    <ZoomTools>
      <IconButton aria-label="播放"><PlayIcon /></IconButton>
      <ZoomOut aria-label="缩小"><MinusIcon /></ZoomOut>
      <Range type="range" min="0" max="100" defaultValue="23" aria-label="缩放" />
      <IconButton aria-label="放大"><PlusIcon /></IconButton>
      <ZoomValue>100%<Caret $color="#999" /></ZoomValue>
      <IconButton aria-label="全屏"><FullIcon /></IconButton>
      <FitButton aria-label="适应宽度"><FitIcon /></FitButton>
    </ZoomTools>
  </StatusBar>
);

export default function App() {
  return (
    <>
      <GlobalStyle />
      <Window>
        <MenuStrip>
          <StripPart $width={109} />
          <StripPart $width={117} $open />
          <StripPart $grow />
        </MenuStrip>
        <TopRibbon />
        <Body>
          <SymbolLibrary />
          <Editor />
          <SideBar>
            <SideToggle aria-label="收起"><DoubleChevron size={28} /></SideToggle>
            {sideTools.map((tool) => (
              <SideButton key={tool.name} $active={tool.active} aria-label={tool.name}>{tool.icon}</SideButton>
            ))}
          </SideBar>
        </Body>
        <Status />
      </Window>
    </>
  );
}
